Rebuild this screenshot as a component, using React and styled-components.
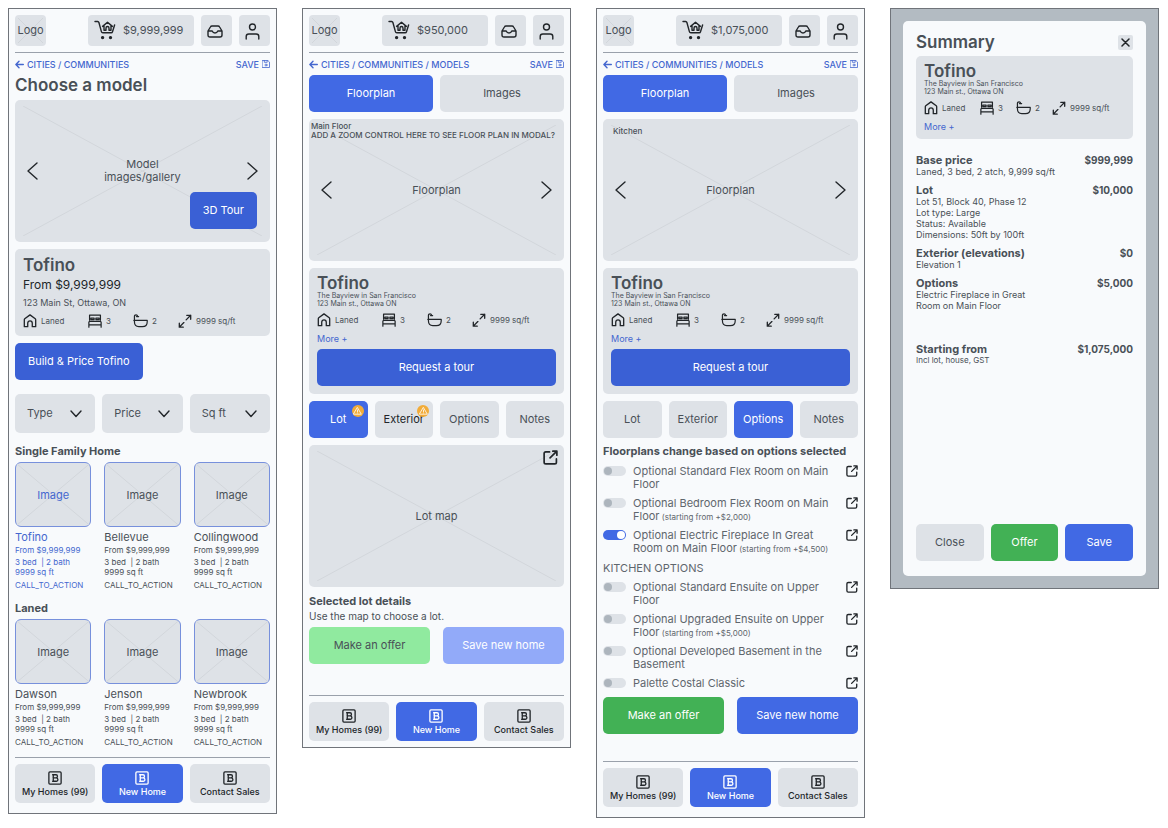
import React from "react";
import styled, { createGlobalStyle, css } from "styled-components";

const color = {
  page: "#f8fafc",
  panel: "#dee2e7",
  blue: "#4169e4",
  deepBlue: "#3a60d5",
  paleBlue: "#92aaf9",
  green: "#42b155",
  paleGreen: "#90ea9f",
  text: "#495057",
  soft: "#5f666d",
  ink: "#212529",
  link: "#4467cf",
  rule: "#9aa1ab",
  edge: "#70747a",
  orange: "#f2ac38",
};

const GlobalStyle = createGlobalStyle`
  *, *::before, *::after { box-sizing: border-box; }
  body {
    margin: 0;
    background: #fff;
    color: ${color.text};
    font-family: Inter, "Open Sans", sans-serif;
    font-size: 11px;
    line-height: 13px;
  }
  h2, h3, p { margin: 0; }
  a { color: inherit; text-decoration: none; }
  button, select { font: inherit; color: inherit; border: 0; margin: 0; padding: 0; cursor: pointer; }
  svg { display: block; flex: none; }
`;

const Board = styled.main`
  display: grid;
  grid-template-columns: repeat(4, minmax(0, 1fr));
  gap: 25px;
  align-items: start;
  padding: 8px 9px 8px 8px;
`;

const Screen = styled.section`
  display: flex;
  flex-direction: column;
  padding: 6px 6px ${(p) => p.$bottom || 10}px;
  background: ${color.page};
  border: 1px solid ${color.edge};
`;

const Header = styled.header`
  display: flex;
  gap: 7px;
  padding-bottom: 6px;
  border-bottom: 1px solid ${color.rule};
`;

const Logo = styled.a`
  position: relative;
  display: grid;
  place-items: center;
  width: 31px;
  height: 31px;
  margin-right: auto;
  border-radius: 4px;
  background: ${color.panel};
`;

const HeaderButton = styled.button`
  display: flex;
  align-items: center;
  justify-content: center;
  width: 31px;
  height: 31px;
  padding: 2px 4px 0 0;
  border-radius: 4px;
  background: ${color.panel};
  color: ${color.ink};
`;

const CartButton = styled(HeaderButton)`
  justify-content: flex-start;
  gap: 7px;
  width: 106px;
  padding: 0 6px;
`;

const CartTotal = styled.span`
  color: ${color.text};
`;

const Crumbs = styled.nav`
  display: flex;
  align-items: center;
  justify-content: space-between;
  height: 22px;
  color: ${color.link};
  font-size: 9px;
  font-weight: 500;
  white-space: nowrap;
`;

const CrumbLink = styled.a`
  display: inline-flex;
  align-items: center;
  gap: 3px;
`;

const Title = styled.h2`
  font-size: 17px;
  line-height: 20px;
  font-weight: 600;
`;

const ScreenTitle = styled(Title)`
  margin-bottom: 5px;
`;

const Viewer = styled.div`
  position: relative;
  display: flex;
  align-items: center;
  justify-content: space-between;
  height: 142px;
  padding: 0 12px;
  border-radius: 5px;
  background: ${color.panel};
  text-align: center;
  margin-bottom: ${(p) => p.$after ?? 7}px;
`;

const MapViewer = styled(Viewer)`
  justify-content: center;
`;

const CrossSvg = styled.svg`
  position: absolute;
  inset: ${(p) => p.$inset};
  width: calc(100% - ${(p) => p.$dx}px);
  height: calc(100% - ${(p) => p.$dy}px);
  stroke: #d2d6db;
  pointer-events: none;
`;

const ViewerCaption = styled.span`
  position: relative;
`;

const ViewerNote = styled.span`
  position: absolute;
  top: ${(p) => (p.$inset ? 8 : 3)}px;
  left: ${(p) => (p.$inset ? 10 : 2)}px;
  font-size: 8px;
  font-weight: 500;
  line-height: 9px;
  text-align: left;
  white-space: nowrap;
`;

const IconButton = styled.button`
  position: relative;
  display: grid;
  place-items: center;
  background: none;
  color: ${color.ink};
`;

const TourButton = styled.span`
  position: absolute;
  right: 13px;
  bottom: 13px;
`;

const MapOpen = styled.span`
  position: absolute;
  top: 5px;
  right: 6px;
`;

const tones = {
  deep: css`background: ${color.deepBlue}; color: #fff;`,
  blue: css`background: ${color.blue}; color: #fff;`,
  green: css`background: ${color.green}; color: #fff;`,
  paleBlue: css`background: ${color.paleBlue}; color: #fff;`,
  paleGreen: css`background: ${color.paleGreen}; color: ${color.text};`,
  plain: css`background: ${color.panel}; color: ${color.text};`,
  plainInk: css`background: ${color.panel}; color: ${color.ink};`,
};

const Button = styled.button`
  position: relative;
  height: 37px;
  padding: 0 ${(p) => (p.$pad ? 13 : 0)}px;
  border-radius: 5px;
  white-space: nowrap;
  ${(p) => tones[p.$tone || "plain"]}
`;

const BuildButton = styled(Button)`
  align-self: flex-start;
  margin: 7px 0 14px;
`;

const Row = styled.div`
  display: grid;
  grid-auto-flow: column;
  grid-auto-columns: minmax(0, 1fr);
  gap: ${(p) => (p.$wide ? 13 : 7)}px;
  margin-top: ${(p) => p.$before || 0}px;
  margin-bottom: ${(p) => p.$after || 0}px;
`;

const Card = styled.article`
  display: flex;
  flex-direction: column;
  align-items: stretch;
  padding: ${(p) => (p.$roomy ? "7px 8px 8px" : "6px 8px")};
  border-radius: 5px;
  background: ${color.panel};
`;

const CardName = styled.h3`
  font-size: 17px;
  line-height: 18px;
  font-weight: 600;
`;

const CardPrice = styled.p`
  color: ${color.ink};
  font-size: 12px;
  line-height: 22px;
`;

const CardAddress = styled.p`
  font-size: 9px;
  line-height: 14px;
`;

const CardSmall = styled.p`
  font-size: 7px;
  line-height: 8px;
`;

const Stats = styled.ul`
  display: grid;
  grid-template-columns: ${(p) => (p.$tight ? "56px 36px 36px auto" : "65px 45px 45px auto")};
  margin: ${(p) => (p.$roomy ? 4 : 5)}px 0 0;
  padding: 0;
  list-style: none;
  font-size: 8px;
  line-height: 14px;
`;

const Stat = styled.li`
  display: flex;
  gap: 4px;
  white-space: nowrap;
  svg { color: ${color.ink}; }
`;

const More = styled.a`
  align-self: flex-start;
  margin-top: 6px;
  color: ${color.link};
  font-size: 9px;
  line-height: 12px;
`;

const RequestButton = styled(Button)`
  margin: 4px 0 2px;
`;

const Badge = styled.span`
  position: absolute;
  top: 4px;
  right: 4px;
  display: grid;
  place-items: center;
  width: 12px;
  height: 12px;
  border-radius: 50%;
  background: ${color.orange};
  color: #fff;
`;

const SelectBox = styled.div`
  position: relative;
  display: flex;
  align-items: center;
  svg { position: absolute; right: 13px; pointer-events: none; color: ${color.ink}; }
`;

const Select = styled.select`
  appearance: none;
  width: 100%;
  height: 39px;
  padding: 0 12px;
  border-radius: 5px;
  background: ${color.panel};
`;

const Models = styled.section`
  margin-top: 10px;
`;

const Heading = styled.h3`
  font-size: 11px;
  line-height: 16px;
  font-weight: 700;
  margin-bottom: ${(p) => p.$after || 0}px;
  white-space: nowrap;
`;

const ModelCard = styled.a`
  display: flex;
  flex-direction: column;
  color: ${(p) => (p.$active ? color.link : color.text)};
  font-size: 8px;
  line-height: 10px;
  white-space: pre;
`;

const Thumb = styled.span`
  position: relative;
  display: grid;
  place-items: center;
  height: 65px;
  margin-bottom: 2px;
  border: 1px solid #7790dc;
  border-radius: 6px;
  background: ${color.panel};
  font-size: 11px;
`;

const ModelName = styled.span`
  font-size: 11px;
  line-height: 16px;
`;

const ModelFacts = styled.span`
  margin: 2px 0 3px;
`;

const BottomNav = styled.nav`
  display: grid;
  grid-template-columns: repeat(3, minmax(0, 1fr));
  gap: 7px;
  margin-top: ${(p) => p.$before}px;
  padding-top: 6px;
  border-top: 1px solid ${color.rule};
`;

const NavItem = styled.a`
  display: flex;
  flex-direction: column;
  align-items: center;
  height: 39px;
  padding-top: 7px;
  border-radius: 5px;
  font-size: 9px;
  font-weight: 500;
  line-height: 14px;
  white-space: nowrap;
  ${(p) => tones[p.$active ? "blue" : "plainInk"]}
`;

const Hint = styled.p`
  font-size: 10px;
  line-height: 14px;
`;

const OptionList = styled.ul`
  display: flex;
  flex-direction: column;
  gap: 6px;
  margin: 6px 0 0;
  padding: 0;
  list-style: none;
  color: ${color.soft};
`;

const OptionRow = styled.li`
  display: flex;
  align-items: flex-start;
`;

const OptionLabel = styled.label`
  flex: 1;
  white-space: nowrap;
`;

const OptionExtra = styled.small`
  font-size: 8px;
  line-height: 8px;
`;

const GroupLabel = styled.h3`
  margin-top: 6px;
  color: ${color.soft};
  font-size: 11px;
  line-height: 14px;
  font-weight: 400;
`;

const Toggle = styled.input`
  appearance: none;
  display: flex;
  align-items: center;
  width: 23px;
  height: 10px;
  margin: 1px 7px 0 0;
  padding: 0 1px;
  border-radius: 5px;
  background: ${color.panel};
  &::before {
    content: "";
    width: 8px;
    height: 8px;
    border-radius: 50%;
    background: #adb5bd;
  }
  &:checked { background: ${color.blue}; justify-content: flex-end; }
  &:checked::before { background: #fff; }
`;

const Backdrop = styled.section`
  padding: 12px;
  background: #b3bbc2;
  border: 1px solid ${color.edge};
`;

const Dialog = styled.div`
  display: flex;
  flex-direction: column;
  min-height: 555px;
  padding: 13px 13px 15px;
  border-radius: 5px;
  background: ${color.page};
`;

const DialogHead = styled.header`
  display: flex;
  align-items: center;
  justify-content: space-between;
  height: 16px;
  margin-bottom: 6px;
`;

const CloseButton = styled(IconButton)`
  width: 15px;
  height: 15px;
  border-radius: 2px;
  background: ${color.panel};
`;

const Costs = styled.dl`
  display: flex;
  flex-direction: column;
  gap: 7px;
  margin: 15px 0 0;
`;

const Cost = styled.div`
  display: grid;
  grid-template-columns: 1fr auto;
  margin-top: ${(p) => (p.$total ? 25 : 0)}px;
`;

const CostName = styled.dt`
  font-weight: 700;
  line-height: 12px;
`;

const CostAmount = styled.dd`
  margin: 0;
  font-size: 10px;
  font-weight: 700;
  line-height: 12px;
`;

const CostNote = styled.dd`
  grid-column: 1 / -1;
  margin: 0;
  font-size: ${(p) => (p.$small ? 8 : 9)}px;
  line-height: 11px;
  white-space: pre-line;
`;

const DialogActions = styled.footer`
  display: grid;
  grid-template-columns: repeat(3, minmax(0, 1fr));
  gap: 7px;
  margin-top: auto;
`;

function Icon({ w = 14, h, box = "0 0 16 16", stroke = 1.4, children }) {
  return (
    <svg width={w} height={h || w} viewBox={box} fill="none" stroke="currentColor" strokeWidth={stroke} strokeLinecap="round" strokeLinejoin="round" aria-hidden="true">
      {children}
    </svg>
  );
}

const CartIcon = () => (
  <Icon w={22} h={21} box="0 0 22 21" stroke={1.4}>
    <path d="M1 1.500H3.600Q4.600 1.500 4.900 2.500L7.400 11.600Q7.700 12.700 8.800 12.700H17.200Q18.200 12.700 18.500 11.700L20.600 5" />
    <path d="M8.600 6.400L13.500 2.200L18.400 6.400M10 5.600V10.200H12V8A1.500 1.500 0 0 1 15 8V10.200H17V5.600" />
    <circle cx="8.600" cy="17.600" r="1" fill="currentColor" />
    <circle cx="16.500" cy="17.600" r="1" fill="currentColor" />
  </Icon>
);
const InboxIcon = () => (
  <Icon w={16} h={13} box="0 0 16 13" stroke={1.4}>
    <path d="M1 6L3.400 2Q3.900 1 5 1H11Q12.100 1 12.600 2L15 6V10Q15 12 13 12H3Q1 12 1 10ZM1 6H5.200Q6 8 8 8T10.800 6H15" />
  </Icon>
);
const UserIcon = () => (
  <Icon w={15} h={17} box="0 0 15 17" stroke={1.4}>
    <circle cx="7.500" cy="4" r="3" />
    <path d="M1.200 16V13.500Q1.200 11 3.800 11H11.200Q13.800 11 13.800 13.500V16" />
  </Icon>
);
const ArrowLeft = () => (
  <Icon w={9} h={9} box="0 0 9 9" stroke={1.4}>
    <path d="M8.300 4.500H1M4 1.300L.9 4.500L4 7.700" />
  </Icon>
);
const SaveIcon = () => (
  <Icon w={8} h={8} box="0 0 8 8" stroke={0.8}>
    <path d="M.5 .5H5.900L7.500 2.100V7.500H.5ZM2.300 .6V2.300H5.200V.6" />
    <circle cx="4" cy="5" r="1" />
  </Icon>
);
const Chevron = ({ right }) => (
  <Icon w={11} h={18} box="0 0 11 18" stroke={1.4}>
    <path d={right ? "M1 1L10 9L1 17" : "M10 1L1 9L10 17"} />
  </Icon>
);
const CaretDown = () => (
  <Icon w={12} h={8} box="0 0 12 8" stroke={1.4}>
    <path d="M1 1L6 6.500L11 1" />
  </Icon>
);
const HouseIcon = () => (
  <Icon stroke={1.5}>
    <path d="M1.500 6.500Q1.500 6 2 5.500L8 1L14 5.500Q14.500 6 14.500 6.500V14.500H10.600V10.500A2.600 2.600 0 0 0 5.400 10.500V14.500H1.500Z" />
  </Icon>
);
const BedIcon = () => (
  <Icon stroke={1.4}>
    <path d="M1.800 7V1.200H14.200V7M1 15V9.500Q1 8.300 2.200 8.300H13.800Q15 8.300 15 9.500V15M1 12.300H15M3.300 6V4.800H7V6M9 6V4.800H12.700V6M3.300 6.300H7M9 6.300H12.700" />
  </Icon>
);
const BathIcon = () => (
  <Icon w={15} h={14} box="0 0 16 15" stroke={1.3}>
    <path d="M.8 6.800H15.200V8.200Q15.200 13.500 10 13.500H6.200Q1.500 13.500 1.500 8.200V2.800Q1.500 .9 3.300 .9Q4.600 .9 4.900 2.300M3.700 2.700H6" />
  </Icon>
);
const ExpandIcon = () => (
  <Icon stroke={1.5}>
    <path d="M10 1.500H14.500V6M14.500 1.500L9.300 6.700M6 15H1.500V10.500M1.500 15L6.700 9.800" />
  </Icon>
);
const OpenIcon = ({ size = 12 }) => (
  <Icon w={size} stroke={1.8}>
    <path d="M7 2H3Q1.200 2 1.200 3.800V13Q1.200 14.800 3 14.800H12.500Q14.300 14.800 14.300 13V9.500M10.500 1.200H14.800V5.500M14.500 1.500L7.500 8.500" />
  </Icon>
);
const WarnIcon = () => (
  <Icon w={9} h={8} box="0 0 9 8" stroke={0.8}>
    <path d="M4.500 .7L8.300 7.200H.7ZM4.500 3V4.700M4.500 5.900V6" />
  </Icon>
);
const SquareBIcon = () => (
  <Icon w={14} stroke={1.5}>
    <rect x="1" y="1" width="14" height="14" rx="1.200" />
    <path d="M5.300 4.300H9.200Q10.800 4.300 10.800 6T9.200 7.800H5.800M9.200 7.800Q11.300 7.800 11.300 9.800T9.200 11.700H5.300M6 4.300V11.700" />
  </Icon>
);
const CloseIcon = () => (
  <Icon w={9} h={9} box="0 0 9 9" stroke={1.5}>
    <path d="M1 1L8 8M8 1L1 8" />
  </Icon>
);

function Cross({ inset = "6px 8px", dx = 16, dy = 12 }) {
  return (
    <CrossSvg $inset={inset} $dx={dx} $dy={dy} viewBox="0 0 100 100" preserveAspectRatio="none" aria-hidden="true">
      <path d="M0 0L100 100M100 0L0 100" vectorEffect="non-scaling-stroke" />
    </CrossSvg>
  );
}

function TopBar({ total, path }) {
  return (
    <>
      <Header>
        <Logo href="#home">
          <Cross inset="3px" dx={6} dy={6} />
          <ViewerCaption>Logo</ViewerCaption>
        </Logo>
        <CartButton>
          <CartIcon />
          <CartTotal>{total}</CartTotal>
        </CartButton>
        <HeaderButton aria-label="Inbox"><InboxIcon /></HeaderButton>
        <HeaderButton aria-label="Account"><UserIcon /></HeaderButton>
      </Header>
      <Crumbs>
        <CrumbLink href="#back"><ArrowLeft />{path}</CrumbLink>
        <CrumbLink href="#save">SAVE <SaveIcon /></CrumbLink>
      </Crumbs>
    </>
  );
}

function Gallery({ caption, note, noteInset, children }) {
  return (
    <Viewer>
      <Cross />
      {note && <ViewerNote $inset={noteInset}>{note}</ViewerNote>}
      <IconButton aria-label="Previous"><Chevron /></IconButton>
      <ViewerCaption>{caption}</ViewerCaption>
      <IconButton aria-label="Next"><Chevron right /></IconButton>
      {children}
    </Viewer>
  );
}

function HomeStats({ tight, roomy }) {
  return (
    <Stats $tight={tight} $roomy={roomy}>
      <Stat><HouseIcon />Laned</Stat>
      <Stat><BedIcon />3</Stat>
      <Stat><BathIcon />2</Stat>
      <Stat><ExpandIcon />9999 sq/ft</Stat>
    </Stats>
  );
}

function HomeCard({ tight, action }) {
  return (
    <Card>
      <CardName>Tofino</CardName>
      <CardSmall>The Bayview in San Francisco</CardSmall>
      <CardSmall>123 Main st., Ottawa ON</CardSmall>
      <HomeStats tight={tight} />
      <More href="#more">More +</More>
      {action && <RequestButton $tone="deep">Request a tour</RequestButton>}
    </Card>
  );
}

function Filter({ name }) {
  return (
    <SelectBox>
      <Select aria-label={name} defaultValue={name}>
        <option>{name}</option>
      </Select>
      <CaretDown />
    </SelectBox>
  );
}

function ModelGroup({ title, names, active }) {
  return (
    <Models>
      <Heading $after={3}>{title}</Heading>
      <Row $wide>
        {names.map((name) => (
          <ModelCard key={name} href={"#" + name} $active={name === active}>
            <Thumb>
              <Cross inset="1px" dx={2} dy={2} />
              <ViewerCaption>Image</ViewerCaption>
            </Thumb>
            <ModelName>{name}</ModelName>
            <span>From $9,999,999</span>
            <ModelFacts>{"3 bed  | 2 bath\n9999 sq ft"}</ModelFacts>
            <span>CALL_TO_ACTION</span>
          </ModelCard>
        ))}
      </Row>
    </Models>
  );
}

function Tabs({ items, active, alerts = [], before = 0, after = 7 }) {
  return (
    <Row $before={before} $after={after}>
      {items.map((item) => (
        <Button key={item} $tone={item === active ? "blue" : alerts.includes(item) ? "plainInk" : "plain"}>
          {item}
          {alerts.includes(item) && <Badge><WarnIcon /></Badge>}
        </Button>
      ))}
    </Row>
  );
}

function Footer({ before }) {
  return (
    <BottomNav $before={before}>
      <NavItem href="#my-homes"><SquareBIcon />My Homes (99)</NavItem>
      <NavItem href="#new-home" $active><SquareBIcon />New Home</NavItem>
      <NavItem href="#contact"><SquareBIcon />Contact Sales</NavItem>
    </BottomNav>
  );
}

function Options({ items, group }) {
  return (
    <OptionList>
      {items.map((item, i) => (
        <OptionRow key={item.first}>
          <Toggle type="checkbox" id={group + i} defaultChecked={item.on} />
          <OptionLabel htmlFor={group + i}>
            {item.first}
            {item.second && <><br />{item.second}</>}
            {item.extra && <OptionExtra> {item.extra}</OptionExtra>}
          </OptionLabel>
          <IconButton aria-label="Open details"><OpenIcon /></IconButton>
        </OptionRow>
      ))}
    </OptionList>
  );
}

const mainOptions = [
  { first: "Optional Standard Flex Room on Main", second: "Floor" },
  { first: "Optional Bedroom Flex Room on Main", second: "Floor", extra: "(starting from +$2,000)" },
  { first: "Optional Electric Fireplace In Great", second: "Room on Main Floor", extra: "(starting from +$4,500)", on: true },
];

const kitchenOptions = [
  { first: "Optional Standard Ensuite on Upper", second: "Floor" },
  { first: "Optional Upgraded Ensuite on Upper", second: "Floor", extra: "(starting from +$5,000)" },
  { first: "Optional Developed Basement in the", second: "Basement" },
  { first: "Palette Costal Classic" },
];

const costs = [
  { name: "Base price", amount: "$999,999", note: "Laned, 3 bed, 2 atch, 9,999 sq/ft" },
  { name: "Lot", amount: "$10,000", note: "Lot 51, Block 40, Phase 12\nLot type: Large\nStatus: Available\nDimensions: 50ft by 100ft" },
  { name: "Exterior (elevations)", amount: "$0", note: "Elevation 1" },
  { name: "Options", amount: "$5,000", note: "Electric Fireplace in Great\nRoom on Main Floor" },
  { name: "Starting from", amount: "$1,075,000", note: "Incl lot, house, GST", total: true },
];

const sections = ["Lot", "Exterior", "Options", "Notes"];

export default function App() {
  return (
    <>
      <GlobalStyle />
      <Board>
        <Screen>
          <TopBar total="$9,999,999" path="CITIES / COMMUNITIES" />
          <ScreenTitle>Choose a model</ScreenTitle>
          <Gallery caption={<>Model<br />images/gallery</>}>
            <TourButton><Button $tone="deep" $pad>3D Tour</Button></TourButton>
          </Gallery>
          <Card $roomy>
            <CardName>Tofino</CardName>
            <CardPrice>From $9,999,999</CardPrice>
            <CardAddress>123 Main St, Ottawa, ON</CardAddress>
            <HomeStats roomy />
          </Card>
          <BuildButton $tone="deep" $pad>Build &amp; Price Tofino</BuildButton>
          <Row>
            <Filter name="Type" />
            <Filter name="Price" />
            <Filter name="Sq ft" />
          </Row>
          <ModelGroup title="Single Family Home" names={["Tofino", "Bellevue", "Collingwood"]} active="Tofino" />
          <ModelGroup title="Laned" names={["Dawson", "Jenson", "Newbrook"]} />
          <Footer before={10} />
        </Screen>

        <Screen $bottom={6}>
          <TopBar total="$950,000" path="CITIES / COMMUNITIES / MODELS" />
          <Tabs items={["Floorplan", "Images"]} active="Floorplan" />
          <Gallery caption="Floorplan" note={<>Main Floor<br />ADD A ZOOM CONTROL HERE TO SEE FLOOR PLAN IN MODAL?</>} />
          <HomeCard action />
          <Tabs items={sections} active="Lot" alerts={["Lot", "Exterior"]} before={7} />
          <MapViewer $after={6}>
            <Cross />
            <ViewerCaption>Lot map</ViewerCaption>
            <MapOpen><IconButton aria-label="Open map"><OpenIcon size={15} /></IconButton></MapOpen>
          </MapViewer>
          <Heading>Selected lot details</Heading>
          <Hint>Use the map to choose a lot.</Hint>
          <Row $wide $before={4}>
            <Button $tone="paleGreen">Make an offer</Button>
            <Button $tone="paleBlue">Save new home</Button>
          </Row>
          <Footer before={31} />
        </Screen>

        <Screen>
          <TopBar total="$1,075,000" path="CITIES / COMMUNITIES / MODELS" />
          <Tabs items={["Floorplan", "Images"]} active="Floorplan" />
          <Gallery caption="Floorplan" note="Kitchen" noteInset />
          <HomeCard action />
          <Tabs items={sections} active="Options" before={7} after={5} />
          <Heading>Floorplans change based on options selected</Heading>
          <Options items={mainOptions} group="main" />
          <GroupLabel>KITCHEN OPTIONS</GroupLabel>
          <Options items={kitchenOptions} group="kitchen" />
          <Row $wide $before={7}>
            <Button $tone="green">Make an offer</Button>
            <Button $tone="blue">Save new home</Button>
          </Row>
          <Footer before={27} />
        </Screen>

        <Backdrop>
          <Dialog role="dialog" aria-label="Summary">
            <DialogHead>
              <Title>Summary</Title>
              <CloseButton aria-label="Close summary"><CloseIcon /></CloseButton>
            </DialogHead>
            <HomeCard tight />
            <Costs>
              {costs.map((cost) => (
                <Cost key={cost.name} $total={cost.total}>
                  <CostName>{cost.name}</CostName>
                  <CostAmount>{cost.amount}</CostAmount>
                  <CostNote $small={cost.total}>{cost.note}</CostNote>
                </Cost>
              ))}
            </Costs>
            <DialogActions>
              <Button>Close</Button>
              <Button $tone="green">Offer</Button>
              <Button $tone="blue">Save</Button>
            </DialogActions>
          </Dialog>
        </Backdrop>
      </Board>
    </>
  );
}
